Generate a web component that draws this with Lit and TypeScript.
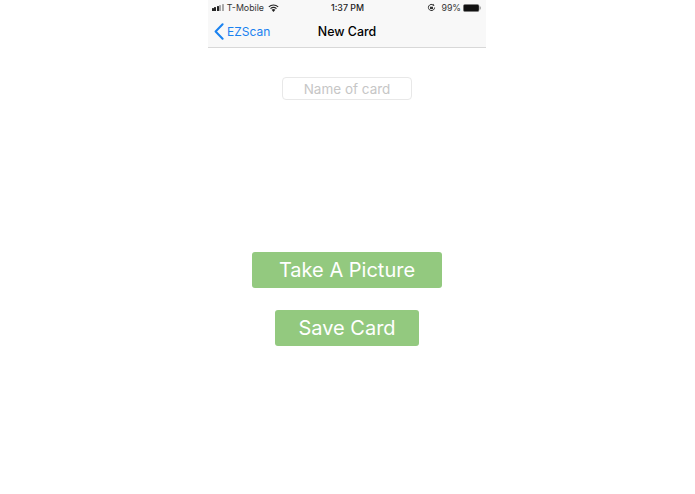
import { LitElement, html, css } from "lit";
import { customElement } from "lit/decorators.js";

@customElement("app-root")
export class AppRoot extends LitElement {
  static styles = css`
    :host {
      display: block;
      width: 100%;
      height: 494px;
      background: #fff;
      font-family: Inter, "Liberation Sans", sans-serif;
      overflow: hidden;
    }
    .phone {
      width: 278px;
      margin-left: 208px;
      display: flex;
      flex-direction: column;
      align-items: center;
    }
    .top {
      width: 100%;
      height: 48px;
      box-sizing: border-box;
      background: #f8f8f8;
      border-bottom: 1px solid #d8d8d8;
      display: flex;
      flex-direction: column;
    }
    .status {
      height: 15px;
      display: flex;
      align-items: center;
      justify-content: space-between;
      padding: 0 5px 0 4px;
      font-size: 8.8px;
      color: #333;
      position: relative;
    }
    .group {
      display: flex;
      align-items: center;
    }
    .signal {
      display: flex;
      align-items: flex-end;
      gap: 0.6px;
      height: 7px;
      margin-right: 3px;
    }
    .signal i {
      display: block;
      width: 1.9px;
      background: #222;
      border-radius: 0.5px;
    }
    .signal i.off {
      background: #a8a8a8;
    }
    .carrier {
      margin-right: 4px;
    }
    .time {
      font-weight: 500;
      color: #222;
    }
    .centered {
      position: absolute;
      left: 1px;
      right: 0;
      text-align: center;
    }
    .pct {
      margin: 0 2px 0 5px;
    }
    .nav {
      flex: 1;
      position: relative;
      display: flex;
      align-items: center;
      justify-content: center;
    }
    .title {
      font-size: 12.4px;
      font-weight: 500;
      color: #000;
    }
    .back {
      position: absolute;
      left: 6px;
      top: 0;
      bottom: 0;
      display: flex;
      align-items: center;
      gap: 3px;
      color: #1a82f0;
      font-size: 12px;
    }
    .name {
      width: 130px;
      height: 23px;
      box-sizing: border-box;
      margin-top: 29px;
      border: 1px solid #e8e8e8;
      border-radius: 4px;
      background: #fff;
      color: #c6c6c6;
      font-size: 13.5px;
      display: flex;
      align-items: center;
      justify-content: center;
    }
    .btn {
      height: 36px;
      background: #93c97f;
      border-radius: 3px;
      color: #fff;
      font-size: 20px;
      display: flex;
      align-items: center;
      justify-content: center;
    }
    .take {
      width: 190px;
      margin-top: 152px;
    }
    .save {
      width: 144px;
      margin-top: 22px;
    }
  `;

  render() {
    return html`
      <div class="phone">
        <div class="top">
          <div class="status">
            <div class="group">
              <div class="signal">
                <i style="height:3px"></i><i style="height:4px"></i><i style="height:5px"></i
                ><i class="off" style="height:6px"></i><i class="off" style="height:7px"></i>
              </div>
              <span class="carrier">T-Mobile</span>
              <svg width="11" height="8" viewBox="0 0 11 8">
                <path d="M5.5 8 L3.6 5.8 A3 3 0 0 1 7.4 5.8 Z" fill="#222" />
                <path d="M2.5 4.6 A4.6 4.6 0 0 1 8.5 4.6" fill="none" stroke="#222" stroke-width="1.1" />
                <path d="M0.8 2.8 A7 7 0 0 1 10.2 2.8" fill="none" stroke="#222" stroke-width="1.1" />
              </svg>
            </div>
            <span class="time centered">1:37 PM</span>
            <div class="group">
              <svg width="9" height="9" viewBox="0 0 9 9">
                <path d="M7.6 4.5 A3.1 3.1 0 1 1 6.6 2.2" fill="none" stroke="#333" stroke-width="1" />
                <path d="M6 0.8 L7.6 2.4 L5.6 3 Z" fill="#333" />
                <rect x="3" y="3.7" width="3" height="2.4" fill="#333" />
              </svg>
              <span class="pct">99%</span>
              <svg width="18" height="8" viewBox="0 0 18 8">
                <rect x="0.4" y="0.4" width="15.6" height="7.2" rx="1.6" fill="#111" stroke="#777" stroke-width="0.6" />
                <rect x="16.6" y="2.6" width="1.2" height="2.8" fill="#999" />
              </svg>
            </div>
          </div>
          <div class="nav">
            <div class="back">
              <svg width="10" height="17" viewBox="0 0 10 17">
                <path d="M8.6 1.2 L1.6 8.5 L8.6 15.8" fill="none" stroke="#1a82f0" stroke-width="2" stroke-linecap="round" stroke-linejoin="round" />
              </svg>
              <span>EZScan</span>
            </div>
            <span class="title">New Card</span>
          </div>
        </div>
        <div class="name">Name of card</div>
        <div class="btn take">Take A Picture</div>
        <div class="btn save">Save Card</div>
      </div>
    `;
  }
}
